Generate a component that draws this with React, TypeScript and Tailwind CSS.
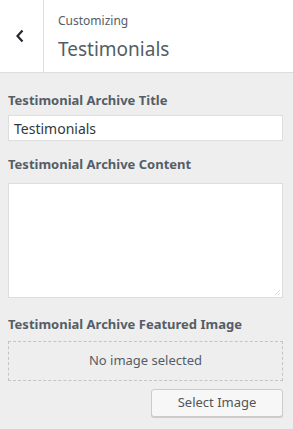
import React from "react";

export default function App() {
  const font = { fontFamily: '"Noto Sans", "Open Sans", sans-serif' };
  return (
    <div className="w-[293px] h-[429px] bg-[#eeeeee] overflow-hidden" style={font}>
      <div className="flex h-[73px] bg-white border-b border-[#dddddd]">
        <div className="w-[44px] border-r border-[#dddddd] flex items-center justify-center">
          <svg width="10" height="14" viewBox="0 0 10 14" className="ml-[-4px] mt-[-1px]">
            <path d="M7.5 1.5 L2.5 7 L7.5 12.5" fill="none" stroke="#23282d" strokeWidth="2.2" />
          </svg>
        </div>
        <div className="pl-[14px] pt-[12px] flex flex-col">
          <span className="text-[12px] leading-[17px] text-[#555d66]">Customizing</span>
          <span className="text-[19px] leading-[26px] mt-[7px] text-[#555d66]">Testimonials</span>
        </div>
      </div>
      <div className="pl-[8px] pr-[10px] pt-[18px] flex flex-col">
        <label className="text-[13px] leading-[18px] font-bold text-[#555d66]">Testimonial Archive Title</label>
        <div className="mt-[6px] h-[26px] bg-white border border-[#dddddd] flex items-center px-[5px] text-[14px] text-[#32373c]">
          Testimonials
        </div>
        <label className="mt-[14px] text-[13px] leading-[18px] font-bold text-[#555d66]">Testimonial Archive Content</label>
        <div className="relative mt-[10px] h-[115px] bg-white border border-[#dddddd]">
          <svg width="8" height="8" viewBox="0 0 8 8" className="absolute right-[1px] bottom-[1px]">
            <path d="M7 2 L2 7 M7 5 L5 7" stroke="#dddddd" strokeWidth="1" />
          </svg>
        </div>
        <label className="mt-[17px] text-[13px] leading-[18px] font-bold text-[#555d66]">Testimonial Archive Featured Image</label>
        <div className="mt-[8px] h-[40px] border border-dashed border-[#c3c4c7] flex items-center justify-center text-[13px] text-[#555d66]">
          No image selected
        </div>
        <div className="flex justify-end mt-[8px]">
          <button className="w-[132px] h-[28px] rounded-[3px] border border-[#cccccc] bg-[#f7f7f7] shadow-[0_1px_0_#cccccc] text-[13px] text-[#555555]">
            Select Image
          </button>
        </div>
      </div>
    </div>
  );
}
